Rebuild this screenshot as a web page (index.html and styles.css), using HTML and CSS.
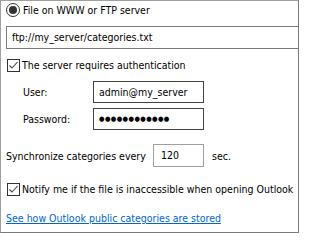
FILE: index.html
```html
<!DOCTYPE html>
<html>
<head>
<meta charset="utf-8">
<link rel="stylesheet" href="styles.css">
</head>
<body>
<div class="frame">
  <div class="row radio-row">
    <span class="radio"><span class="dot"></span></span>
    <span class="label">File on WWW or FTP server</span>
  </div>
  <div class="url-box">ftp://my_server/categories.txt</div>
  <div class="row check-row auth">
    <span class="check"><svg width="11" height="11" viewBox="0 0 11 11"><path d="M1.5 5.5 L4 8 L9.5 2" fill="none" stroke="#444" stroke-width="1.1"/></svg></span>
    <span class="label">The server requires authentication</span>
  </div>
  <div class="field-row user">
    <span class="flabel">User:</span>
    <div class="box">admin@my_server</div>
  </div>
  <div class="field-row pass">
    <span class="flabel">Password:</span>
    <div class="box dots">●●●●●●●●●●●●</div>
  </div>
  <div class="sync-row">
    <span class="slabel">Synchronize categories every</span>
    <div class="box num">120</div>
    <span class="sec">sec.</span>
  </div>
  <div class="row check-row notify">
    <span class="check"><svg width="11" height="11" viewBox="0 0 11 11"><path d="M1.5 5.5 L4 8 L9.5 2" fill="none" stroke="#444" stroke-width="1.1"/></svg></span>
    <span class="label">Notify me if the file is inaccessible when opening Outlook</span>
  </div>
  <a class="link" href="#">See how Outlook public categories are stored</a>
</div>
</body>
</html>
```
FILE: styles.css
```css
html, body {
  margin: 0;
  padding: 0;
  background: #fff;
}
body {
  font-family: "DejaVu Sans", sans-serif;
  font-stretch: condensed;
  font-size: 10.5px;
  color: #000;
}
.frame {
  box-sizing: border-box;
  width: 299px;
  height: 233px;
  border: 1px solid #7a7a7a;
  border-top-color: #a0a0a0;
  border-left-color: #a0a0a0;
  display: flex;
  flex-direction: column;
  padding-left: 5px;
}
.row {
  display: flex;
  align-items: center;
  height: 14px;
}
.radio-row {
  margin-top: 2px;
}
.radio {
  box-sizing: border-box;
  width: 14px;
  height: 14px;
  border: 1px solid #333;
  border-radius: 50%;
  display: flex;
  align-items: center;
  justify-content: center;
}
.dot {
  width: 8px;
  height: 8px;
  border-radius: 50%;
  background: #333;
}
.label {
  margin-left: 3px;
  white-space: nowrap;
}
.url-box {
  box-sizing: border-box;
  margin-top: 9px;
  height: 23px;
  border: 1px solid #7a7a7a;
  border-right: none;
  padding-left: 5px;
  line-height: 21px;
}
.check {
  box-sizing: border-box;
  width: 13px;
  height: 13px;
  border: 1px solid #333;
  margin-left: 1px;
  display: flex;
  align-items: center;
  justify-content: center;
}
.check svg { display: block; }
.check-row .label { margin-left: 2px; }
.auth {
  margin-top: 9px;
}
.field-row {
  display: flex;
  align-items: center;
  height: 22px;
}
.user { margin-top: 9px; }
.pass { margin-top: 5px; }
.flabel {
  width: 70px;
  padding-left: 17px;
}
.box {
  box-sizing: border-box;
  border: 1px solid #444;
  height: 22px;
  width: 111px;
  padding-left: 5px;
  line-height: 20px;
}
.dots {
  font-size: 7px;
  letter-spacing: 0.4px;
}
.sync-row {
  display: flex;
  align-items: center;
  margin-top: 14px;
  height: 23px;
}
.slabel {
  width: 147px;
  white-space: nowrap;
}
.num {
  width: 51px;
  height: 23px;
  border-color: #a0a0a0;
  padding-left: 7px;
}
.sec { margin-left: 8px; }
.notify { margin-top: 15px; }
.link {
  margin-top: 16px;
  color: #0066cc;
  text-decoration: underline;
  white-space: nowrap;
  align-self: flex-start;
}
```
